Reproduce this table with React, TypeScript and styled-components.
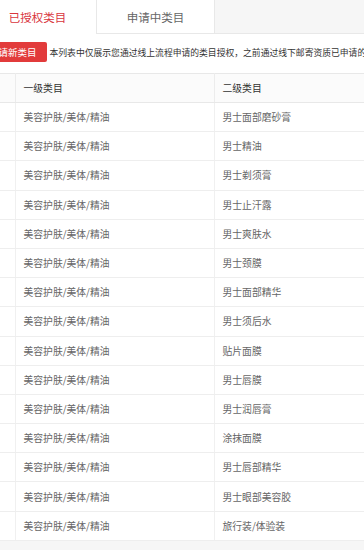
import React from 'react'
import styled, { createGlobalStyle } from 'styled-components'

const GlobalStyle = createGlobalStyle`
  html, body {
    margin: 0;
    padding: 0;
    background: #f6f6f6;
    font-family: "Noto Sans CJK SC", "Microsoft YaHei", sans-serif;
  }
`

const SUB_CATEGORIES = [
  '男士面部磨砂膏',
  '男士精油',
  '男士剃须膏',
  '男士止汗露',
  '男士爽肤水',
  '男士颈膜',
  '男士面部精华',
  '男士须后水',
  '贴片面膜',
  '男士唇膜',
  '男士润唇膏',
  '涂抹面膜',
  '男士唇部精华',
  '男士眼部美容胶',
  '旅行装/体验装'
]

const TABS = ['已授权类目', '申请中类目']

export default function App() {
  return (
    <>
      <GlobalStyle />
      <Viewport>
        <Page>
          <TabBar>
            {TABS.map((label, idx) => (
              <Tab key={label} active={idx === 0}>
                {label}
              </Tab>
            ))}
          </TabBar>
          <Content>
            <Notice>
              <ApplyButton>申请新类目</ApplyButton>
              <NoticeText>
                本列表中仅展示您通过线上流程申请的类目授权，之前通过线下邮寄资质已申请的类目不在此列表中展示
              </NoticeText>
            </Notice>
            <Table>
              <colgroup>
                <col style={{ width: 36 }} />
                <col style={{ width: 199 }} />
                <col />
              </colgroup>
              <thead>
                <tr>
                  <Th>序号</Th>
                  <Th>一级类目</Th>
                  <Th>二级类目</Th>
                </tr>
              </thead>
              <tbody>
                {SUB_CATEGORIES.map((name, idx) => (
                  <tr key={name}>
                    <Td>{idx + 1}</Td>
                    <Td>美容护肤/美体/精油</Td>
                    <Td>{name}</Td>
                  </tr>
                ))}
              </tbody>
            </Table>
          </Content>
        </Page>
      </Viewport>
    </>
  )
}

const Viewport = styled.div`
  width: 364px;
  height: 550px;
  overflow: hidden;
`

const Page = styled.div`
  margin-left: -21px;
  width: 640px;
`

const TabBar = styled.div`
  display: flex;
  height: 34px;
  background: #f6f6f6;
  border-bottom: 1px solid #e8e8e8;
  box-sizing: border-box;
`

const Tab = styled.div<{ active?: boolean }>`
  width: 117px;
  display: flex;
  align-items: center;
  justify-content: center;
  background: #fff;
  font-size: 11.5px;
  color: ${p => (p.active ? '#d9363e' : '#666')};
  border-right: 1px solid #e8e8e8;
  margin-bottom: ${p => (p.active ? '-1px' : '0')};
`

const Content = styled.div`
  background: #fff;
  padding-top: 8px;
`

const Notice = styled.div`
  display: flex;
  align-items: center;
  height: 20px;
  margin-bottom: 11px;
  white-space: nowrap;
`

const ApplyButton = styled.button`
  height: 20px;
  padding: 0 10px;
  border: none;
  border-radius: 2px;
  background: #e23b3b;
  color: #fff;
  font-family: inherit;
  font-size: 9.5px;
  line-height: 20px;
  cursor: pointer;
`

const NoticeText = styled.span`
  margin-left: 3px;
  font-size: 8.8px;
  color: #333;
`

const Table = styled.table`
  width: 100%;
  border-collapse: collapse;
  table-layout: fixed;
  font-size: 9.8px;
`

const Th = styled.th`
  height: 29px;
  padding: 0 8px;
  text-align: left;
  font-weight: normal;
  color: #333;
  background: #fbfbfb;
  border-top: 1px solid #e8e8e8;
  border-bottom: 1px solid #e8e8e8;
  border-right: 1px solid #ececec;
  box-sizing: border-box;
`

const Td = styled.td`
  height: 29.2px;
  padding: 0 8px;
  color: #666;
  border-bottom: 1px solid #eeeeee;
  border-right: 1px solid #f0f0f0;
  box-sizing: border-box;
`
